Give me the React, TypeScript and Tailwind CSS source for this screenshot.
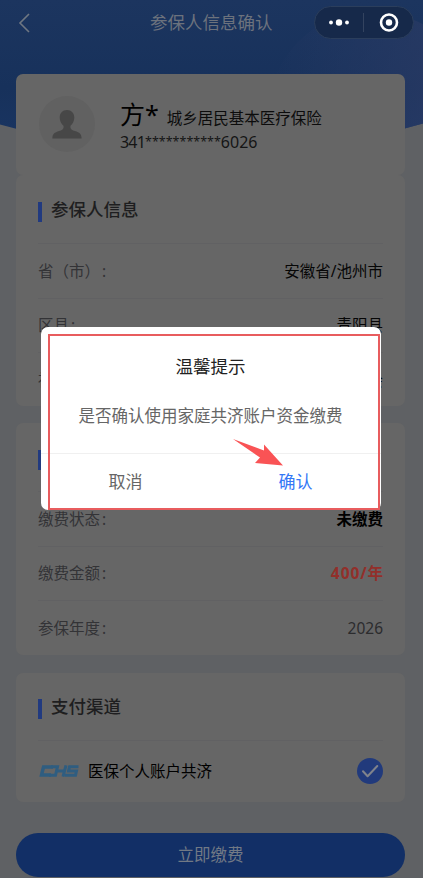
import { ReactNode } from "react";

export default function App() {
    return <div className="relative h-[878px] w-full overflow-hidden bg-[#5f6164] font-['Noto_Sans','Noto_Sans_CJK_SC',sans-serif]">
        <HeaderBackground />
        <div className="relative flex flex-col">
            <Appbar />
            <div className="flex flex-col pl-4 pr-[18px] pt-[29px]">
                <Profile />
                <Card className="h-[231px] pt-px">
                    <CardTitle title="参保人信息" />
                    <Row label="省（市）" value="安徽省/池州市" valueClass="text-[#060606]" />
                    <Row label="区县" value="青阳县" valueClass="text-[#060606]" />
                    <Row label="社区" value="居委会" valueClass="text-[#060606]" />
                </Card>
                <Card className="mt-[17px] h-[232px] pt-px">
                    <CardTitle title="缴费信息" />
                    <Row label="缴费状态" value="未缴费" valueClass="font-bold text-black" />
                    <Row label="缴费金额" value="400/年" valueClass="font-bold tracking-[0.9px] -mr-[0.9px] text-[#922f2a]" />
                    <Row label="参保年度" value="2026" valueClass="text-[#2c2c2e]" />
                </Card>
                <Card className="mt-[18px] h-[129px]">
                    <CardTitle title="支付渠道" />
                    <div className="flex h-[61px] items-center border-t border-[#616163]">
                        <ChsLogo />
                        <span className="ml-[9px] pt-px text-[15.5px] text-black">医保个人账户共济</span>
                        <svg className="ml-auto" width="26" height="26" viewBox="0 0 26 26" fill="none">
                            <circle cx="13" cy="13" r="13" fill="#213a7c" />
                            <path d="M6 13.2l4.600 5L20.300 8" stroke="#80838c" strokeWidth="2" strokeLinecap="round" strokeLinejoin="round" />
                        </svg>
                    </div>
                </Card>
                <button className="mt-[31px] h-[44px] w-full rounded-full bg-[#122f66] text-[16.5px] text-[#717985]">
                    立即缴费
                </button>
            </div>
        </div>
        <ConfirmDialog />
    </div>
}

function HeaderBackground() {
    return <svg className="absolute left-0 top-0" width="423" height="160" viewBox="0 0 423 160">
        <defs>
            <linearGradient id="sky" x1="0" y1="0" x2="0" y2="1">
                <stop offset="0" stopColor="#1c355f" />
                <stop offset="0.55" stopColor="#17315b" />
                <stop offset="1" stopColor="#1a3664" />
            </linearGradient>
            <linearGradient id="glow" x1="0" y1="0" x2="1" y2="0">
                <stop offset="0" stopColor="#293a64" stopOpacity="0" />
                <stop offset="1" stopColor="#293a64" />
            </linearGradient>
            <clipPath id="curve">
                <path d="M0 0H423V123.500Q212 184 0 124.500Z" />
            </clipPath>
        </defs>
        <g clipPath="url(#curve)">
            <rect width="423" height="160" fill="url(#sky)" />
            <circle cx="372" cy="115" r="104" fill="url(#glow)" />
        </g>
    </svg>
}

function Appbar() {
    return <div className="flex h-[45px] items-center pl-[18px] pr-[9px]">
        <svg width="14" height="22" viewBox="0 0 14 22" fill="none">
            <path d="M11 2L2 11L11 20" stroke="#6f7782" strokeWidth="1.600" />
        </svg>
        <div className="ml-[118px] text-[17.5px] text-[#6c727d]">参保人信息确认</div>
        <div className="ml-auto flex h-[33px] w-[100px] items-center rounded-full border border-[#2b3e5c] bg-[#16294a]">
            <svg width="98" height="31" viewBox="0 0 98 31" fill="none">
                <circle cx="16" cy="15.500" r="1.900" fill="white" />
                <circle cx="24" cy="15.500" r="3.200" fill="white" />
                <circle cx="32" cy="15.500" r="1.900" fill="white" />
                <path d="M48.500 6V25" stroke="#33435f" />
                <circle cx="74" cy="15.500" r="8" stroke="white" strokeWidth="2.600" />
                <circle cx="74" cy="15.500" r="3.200" fill="white" />
            </svg>
        </div>
    </div>
}

function Profile() {
    return <div className="flex h-[101px] rounded-[7px] bg-[#666] pl-[23px] pt-[22px]">
        <svg width="56" height="56" viewBox="0 0 56 56">
            <circle cx="28" cy="28" r="28" fill="#616161" />
            <path d="M28 14c4.500 0 7.300 3.200 7.300 7.600 0 3.400-1.600 6.500-3.800 8.200-.5 3.200 1 4.200 4.500 5.300 4.500 1.400 6.600 3 6.600 7.400H13.400c0-4.400 2.100-6 6.600-7.400 3.500-1.100 5-2.100 4.500-5.300-2.200-1.700-3.800-4.800-3.800-8.200C20.700 17.200 23.500 14 28 14z" fill="#474747" />
        </svg>
        <div className="ml-[25px] flex flex-col pt-px text-black">
            <div className="flex h-[34px] items-baseline whitespace-nowrap">
                <span className="text-[25px] leading-[34px]">方*</span>
                <span className="ml-[8px] text-[15.5px] text-[#0c0c0c]">城乡居民基本医疗保险</span>
            </div>
            <div className="flex text-[16px] leading-[22px] text-[#151515]">
                <span className="tracking-[-0.8px]">341</span>
                <span className="text-[12.500px]">***********</span>
                <span>6026</span>
            </div>
        </div>
    </div>
}

function Card({ className, children }: { className: string, children: ReactNode }) {
    return <div className={`rounded-[7px] bg-[#666] px-[22px] ${className}`}>
        {children}
    </div>
}

function CardTitle({ title }: { title: string }) {
    return <div className="flex h-[67px] items-center">
        <div className="mt-[4px] h-5 w-1 bg-[#213a80]"></div>
        <div className="ml-[9px] text-[17.5px] font-medium text-[#1e1e20]">{title}</div>
    </div>
}

function Row({ label, value, valueClass }: { label: string, value: string, valueClass: string }) {
    return <div className="flex h-[54.5px] items-center justify-between border-t border-[#616163] pt-px text-[15.5px]">
        <span className="text-[#333336]">{label}<span className="ml-[2px]">:</span></span>
        <span className={valueClass}>{value}</span>
    </div>
}

function ChsLogo() {
    return <svg className="ml-px" width="40" height="12" viewBox="0 0 40 12" fill="none">
        <path d="M14 2H4.500L2.500 10H12" stroke="#2f5d80" strokeWidth="3.400" />
        <path d="M12 1.700H18.500L16.500 10.300H10M17 6H25M27 .3L24 11.700" stroke="#2f5d80" strokeWidth="3" />
        <path d="M39.500 1.800H30.500L29.500 6H37.500L36.500 10.200H26" stroke="#2f5d80" strokeWidth="3" />
    </svg>
}

function ConfirmDialog() {
    return <div className="absolute left-[40.5px] top-[327px] flex h-[183px] w-[340px] flex-col rounded-[7px] bg-white">
        <div className="flex h-[127px] flex-col items-center border-b border-[#f0f0f0]">
            <div className="mt-[26px] text-[17.5px] leading-[26px] text-[#222]">温馨提示</div>
            <div className="mt-[24px] text-[16.5px] leading-[26px] text-[#666]">是否确认使用家庭共济账户资金缴费</div>
        </div>
        <div className="flex flex-1 text-[17px]">
            <button className="flex-1 text-[#666]">取消</button>
            <button className="flex-1 text-[#3478f6]">确认</button>
        </div>
        <div className="absolute left-[7.5px] top-[7px] h-[176px] w-[332px] border-2 border-[#e85c5e]"></div>
        <svg className="absolute left-[191.5px] top-[111px]" width="54" height="30" viewBox="0 0 54 30">
            <path d="M1 1L32 12.500V6.500L51 27.500L23 25L28 19.500Z" fill="#f95355" />
        </svg>
    </div>
}
